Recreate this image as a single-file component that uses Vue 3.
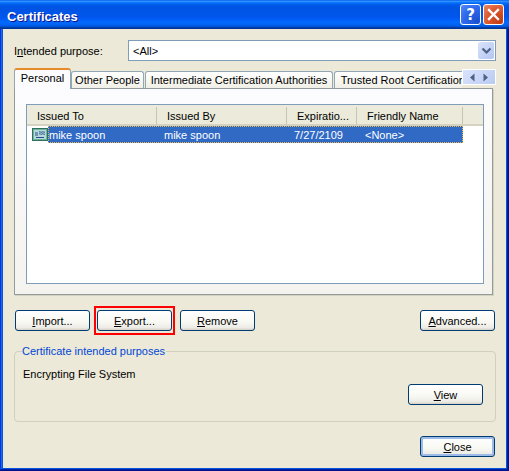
<script setup>
const tabs = [
  { label: 'Other People', width: 73 },
  { label: 'Intermediate Certification Authorities', width: 188 },
  { label: 'Trusted Root Certification Authorities', width: 192 },
]
const columns = [
  { label: 'Issued To', width: 130 },
  { label: 'Issued By', width: 130 },
  { label: 'Expiratio...', width: 70 },
  { label: 'Friendly Name', width: 106 },
]
</script>

<template>
  <div class="window">
    <header class="titlebar">
      <span class="title">Certificates</span>
      <div class="controls">
        <span class="ctl help">?</span>
        <span class="ctl close">
          <svg width="13" height="13" viewBox="0 0 13 13"><path d="M2 2 L11 11 M11 2 L2 11" stroke="#fff" stroke-width="2.4" stroke-linecap="square" /></svg>
        </span>
      </div>
    </header>
    <main class="content">
      <div class="purpose">
        <label class="purpose-label">I<u>n</u>tended purpose:</label>
        <div class="combo">
          <span class="combo-text">&lt;All&gt;</span>
          <span class="combo-btn">
            <svg width="11" height="8" viewBox="0 0 11 8"><path d="M1.5 1.5 L5.5 5.5 L9.5 1.5" fill="none" stroke="#4d6185" stroke-width="2.2" /></svg>
          </span>
        </div>
      </div>

      <div class="tabs">
        <div class="tab tab-active">Personal</div>
        <div class="tab-strip">
          <div v-for="t in tabs" :key="t.label" class="tab" :style="{ width: t.width + 'px' }">{{ t.label }}</div>
        </div>
        <div class="scroller">
          <svg width="7" height="9" viewBox="0 0 7 9"><path d="M5.5 0.5 V8.5 L1 4.5 Z" fill="#4d6185" /></svg>
          <svg width="7" height="9" viewBox="0 0 7 9"><path d="M1.5 0.5 V8.5 L6 4.5 Z" fill="#4d6185" /></svg>
        </div>
      </div>

      <section class="panel">
        <div class="list">
          <div class="list-head">
            <div v-for="c in columns" :key="c.label" class="col" :style="{ width: c.width + 'px' }">{{ c.label }}</div>
          </div>
          <div class="list-row">
            <svg class="cert" width="16" height="14" viewBox="0 0 16 14">
              <rect x="0.5" y="0.5" width="15" height="12" fill="#6fb39b" stroke="#2f6f5e" />
              <rect x="2" y="2" width="12" height="9" fill="#b4d8dc" />
              <path d="M3 5 H6 M3 7 H6 M7 4 C8 3 9 5 10 4 C11 3 12 5 13 4 M7 6 C8 5 9 7 10 6 C11 5 12 7 13 6 M4 9.5 H12" stroke="#2a4f86" fill="none" />
            </svg>
            <div class="sel">
              <span class="cell c1">mike spoon</span>
              <span class="cell c2">mike spoon</span>
              <span class="cell c3">7/27/2109</span>
              <span class="cell c4">&lt;None&gt;</span>
            </div>
          </div>
        </div>
      </section>

      <div class="actions">
        <button class="btn"><u>I</u>mport...</button>
        <span class="highlight"><button class="btn"><u>E</u>xport...</button></span>
        <button class="btn"><u>R</u>emove</button>
        <button class="btn advanced"><u>A</u>dvanced...</button>
      </div>

      <fieldset class="group">
        <legend class="legend">Certificate intended purposes</legend>
        <div class="purposes">Encrypting File System</div>
        <div class="view-row"><button class="btn"><u>V</u>iew</button></div>
      </fieldset>

      <div class="footer">
        <button class="btn default"><u>C</u>lose</button>
      </div>
    </main>
  </div>
</template>

<style>
html, body { margin: 0; background: #ece9d8; }
</style>

<style scoped>
.window {
  width: 509px;
  height: 471px;
  box-sizing: border-box;
  display: flex;
  flex-direction: column;
  padding: 0 3px 3px;
  background: #0855dd;
  box-shadow: inset -1px -1px #00138c, inset 1px 1px #0831d9, inset -2px -2px #001ea0, inset 2px 2px #166aee;
  font-family: "Liberation Sans", sans-serif;
  font-size: 11px;
  color: #000;
  overflow: hidden;
}
.titlebar {
  height: 29px;
  margin: 0 -3px;
  flex: none;
  box-sizing: border-box;
  padding: 4px 5px 0 7px;
  display: flex;
  align-items: center;
  justify-content: space-between;
  background: linear-gradient(180deg, #0058ee 0, #3593ff 4%, #288eff 6%, #127dff 8%, #036ffc 10%, #0262ee 14%, #0057e5 20%, #0054e3 24%, #0055eb 56%, #005bf5 66%, #026afe 76%, #0062ef 86%, #0052d6 92%, #0040ab 94%, #003092 100%);
}
.title {
  color: #fff;
  font-weight: 700;
  font-size: 13px;
  text-shadow: 1px 1px #0f1089;
}
.controls { display: flex; gap: 2px; margin-top: -4px; }
.ctl {
  width: 21px;
  height: 21px;
  box-sizing: border-box;
  border: 1px solid #fff;
  border-radius: 3px;
  display: flex;
  align-items: center;
  justify-content: center;
}
.help {
  background: radial-gradient(circle at 85% 85%, #1c4fd0, #2f6bee 60%, #5a8cf5);
  color: #fff;
  font-family: "DejaVu Sans", sans-serif;
  font-weight: 700;
  font-size: 15px;
}
.close {
  background: radial-gradient(circle at 85% 85%, #c23a12, #de5c32 60%, #e98a66);
}
.content {
  flex: 1;
  background: #ece9d8;
  padding: 11px 10px 0 11px;
  display: flex;
  flex-direction: column;
}
.purpose { display: flex; align-items: center; height: 21px; flex: none; }
.purpose-label { width: 114px; }
.combo {
  flex: 1;
  height: 21px;
  box-sizing: border-box;
  border: 1px solid #7f9db9;
  background: #fff;
  display: flex;
  align-items: center;
  justify-content: space-between;
  padding: 0 1px 0 4px;
}
.combo-btn {
  width: 16px;
  height: 17px;
  border-radius: 2px;
  background: linear-gradient(135deg, #dbe3fb, #b3c5f2);
  display: flex;
  align-items: center;
  justify-content: center;
}
.tabs {
  position: relative;
  margin-top: 7px;
  height: 20px;
  display: flex;
  align-items: flex-end;
  width: 479px;
  z-index: 1;
  flex: none;
}
.tab-strip {
  display: flex;
  gap: 1px;
  width: 391px;
  overflow: hidden;
}
.tab {
  height: 17px;
  line-height: 16px;
  box-sizing: border-box;
  padding: 0;
  text-align: center;
  white-space: nowrap;
  flex: none;
  border: 1px solid #91a7b4;
  border-bottom: none;
  border-radius: 3px 3px 0 0;
  background: linear-gradient(#fff, #f0efe6);
}
.tab-active {
  height: 21px;
  width: 57px;
  line-height: 17px;
  margin-bottom: -1px;
  background: #fcfcfe;
  border-top: 2px solid #e68b2c;
  position: relative;
  z-index: 2;
}
.scroller {
  position: absolute;
  left: 448px;
  top: 1px;
  width: 34px;
  height: 16px;
  box-sizing: border-box;
  border: 1px solid #fff;
  background: linear-gradient(135deg, #dbe3fb, #b9cbf3);
  display: flex;
  align-items: center;
  justify-content: space-evenly;
}
.panel {
  width: 479px;
  height: 207px;
  flex: none;
  box-sizing: border-box;
  border: 1px solid #919b9c;
  box-shadow: 1px 1px #d5d2c0;
  background: linear-gradient(#fcfcfe, #f4f3ee);
  padding: 15px 8px 10px 11px;
}
.list {
  height: 100%;
  box-sizing: border-box;
  border: 1px solid #7f9db9;
  background: #fff;
}
.list-head {
  display: flex;
  height: 19px;
  background: #ebeadb;
  border-bottom: 2px solid #d6d2c2;
}
.col {
  box-sizing: border-box;
  padding: 2px 0 0 10px;
  border-right: 1px solid #c7c5b2;
  height: 17px;
  line-height: 14px;
  margin-top: 2px;
  white-space: nowrap;
}
.list-row {
  display: flex;
  align-items: center;
  height: 17px;
  padding-left: 5px;
}
.cert { flex: none; }
.sel {
  width: 415px;
  height: 17px;
  box-sizing: border-box;
  border: 1px dotted #e6b44a;
  background: #316ac5;
  color: #fff;
  display: flex;
  align-items: center;
  line-height: 17px;
  padding-top: 1px;
}
.cell { white-space: nowrap; }
.c1 { width: 115px; }
.c2 { width: 130px; }
.c3 { width: 71px; }
.actions {
  display: flex;
  align-items: center;
  height: 29px;
  flex: none;
  margin-top: 11px;
  padding-left: 1px;
}
.btn {
  width: 75px;
  height: 21px;
  padding: 0;
  box-sizing: border-box;
  border: 1px solid #003c74;
  border-radius: 3px;
  background: linear-gradient(180deg, #fff 0, #f8f8f3 60%, #ecebe5 88%, #d6d0c5 100%);
  font: inherit;
  color: #000;
  flex: none;
}
.highlight {
  display: block;
  box-sizing: border-box;
  width: 81px;
  height: 29px;
  border: 2px solid #ff0000;
  padding: 2px 1px;
  margin: 0 5px 0 4px;
  line-height: 0;
}
.advanced { margin-left: auto; margin-right: 1px; }
.group {
  margin: 9px 0 0 0;
  padding: 0 12px 0 8px;
  width: 482px;
  height: 78px;
  flex: none;
  box-sizing: border-box;
  border: 1px solid #d0d0bf;
  border-radius: 4px;
}
.legend {
  color: #0046d5;
  padding: 0 1px 0 0;
  margin-left: -1px;
  line-height: 15px;
}
.purposes { margin-top: 8px; line-height: 15px; }
.view-row { display: flex; justify-content: flex-end; margin-top: 2px; }
.footer {
  display: flex;
  justify-content: flex-end;
  padding-right: 1px;
  margin-top: 14px;
  flex: none;
}
.default {
  box-shadow: inset 0 0 0 2px #9dbbe8;
}
</style>
